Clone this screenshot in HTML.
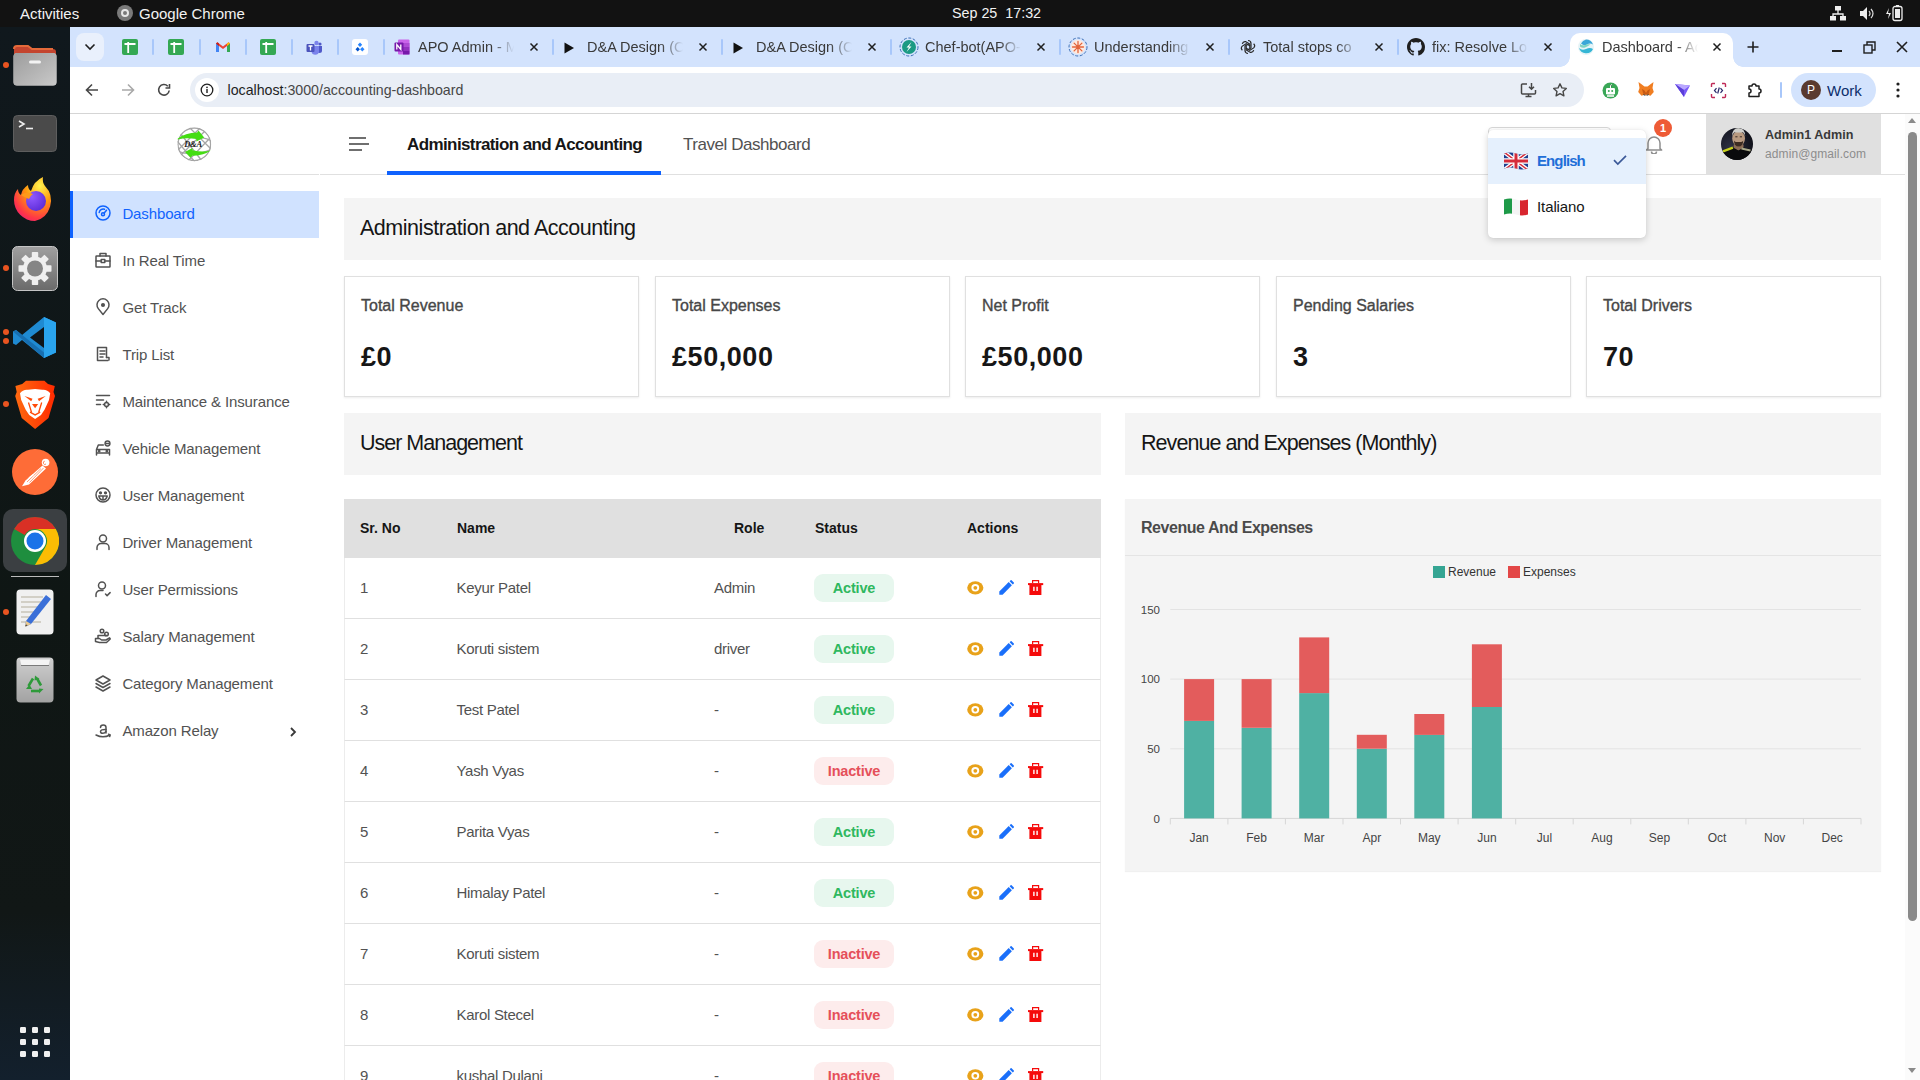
<!DOCTYPE html>
<html><head><meta charset="utf-8">
<style>
*{box-sizing:border-box;margin:0;padding:0}
html,body{width:1920px;height:1080px;overflow:hidden;background:#fff;font-family:"Liberation Sans",sans-serif}
.a{position:absolute}
.nw{white-space:nowrap}
/* gnome bar */
#gbar{left:0;top:0;width:1920px;height:27px;background:#121212;color:#f2f2f2;font-size:15px}
/* dock */
#dock{left:0;top:27px;width:70px;height:1053px;background:linear-gradient(180deg,#10181d 0%,#0f1614 55%,#111716 84%,#13202d 100%)}
.odot{position:absolute;left:3px;width:6px;height:6px;border-radius:50%;background:#e95420}
/* chrome */
#tabs{left:70px;top:27px;width:1850px;height:40px;background:#d3e3fd}
.sep{position:absolute;top:12px;width:2px;height:16px;background:#a8c7fa;border-radius:1px}
.ttl{position:absolute;top:12px;font-size:14.5px;line-height:17px;color:#3a3a3a;width:100px;overflow:hidden;white-space:nowrap;-webkit-mask-image:linear-gradient(90deg,#000 74%,transparent 96%)}
.tx{position:absolute;top:13px;width:14px;height:14px}
#toolbar{left:70px;top:67px;width:1850px;height:47px;background:#fff;border-bottom:1px solid #d5d5d5;border-radius:8px 8px 0 0}
/* page */
#page{left:70px;top:114px;width:1835px;height:966px;background:#fff;overflow:hidden}
#sbar{left:1905px;top:114px;width:15px;height:966px;background:#fbfbfb}

.card{top:162px;width:295px;height:121px;background:#fff;border:1px solid #e0e0e0;box-shadow:0 1px 2px rgba(0,0,0,0.08)}
.cl{position:absolute;left:16px;top:21.2px;font-size:16px;line-height:1;color:#474747;-webkit-text-stroke:0.35px #474747;white-space:nowrap}
.cv{position:absolute;left:16px;top:67.3px;font-size:27px;line-height:1;font-weight:700;color:#161616;letter-spacing:0.55px;white-space:nowrap}
.th{top:407px;font-size:14px;line-height:1;font-weight:700;color:#161616}
.rt{font-size:15px;line-height:1;color:#525252;letter-spacing:-0.3px}
.bdg{width:80px;height:28px;border-radius:9px;font-size:14.5px;font-weight:700;text-align:center;line-height:28px;letter-spacing:-0.2px}
.on{background:#e7f7ee;color:#2fb85f}
.off{background:#fdecec;color:#e5505a}
.si{font-size:15px;line-height:1;letter-spacing:-0.12px}
</style></head><body>

<!-- GNOME top bar -->
<div id="gbar" class="a">
  <div class="a nw" style="left:20px;top:5px;font-size:15px">Activities</div>
  <div class="a" style="left:117px;top:5px;width:16px;height:16px;border-radius:50%;background:#7a7a7a"></div>
  <div class="a" style="left:121px;top:9px;width:8px;height:8px;border-radius:50%;border:2px solid #e8e8e8;background:#7a7a7a"></div>
  <div class="a nw" style="left:139px;top:5px;font-size:15px">Google Chrome</div>
  <div class="a nw" style="left:952px;top:5px;font-size:14.3px">Sep 25&nbsp; 17:32</div>
  <svg class="a" style="left:1829px;top:5px" width="18" height="17" viewBox="0 0 18 17"><rect x="6" y="1" width="6" height="4.5" fill="#eee"/><rect x="1" y="11" width="6" height="4.5" fill="#eee"/><rect x="11" y="11" width="6" height="4.5" fill="#eee"/><path d="M9 5v4M4 11V9h10v2" stroke="#eee" stroke-width="1.3" fill="none"/></svg>
  <svg class="a" style="left:1859px;top:5px" width="16" height="17" viewBox="0 0 16 17"><path d="M1 6h3l4-4v13l-4-4H1z" fill="#eee"/><path d="M10 6q2 2.5 0 5M12 4q4 4.5 0 9" stroke="#ddd" stroke-width="1.2" fill="none"/></svg>
  <svg class="a" style="left:1885px;top:4px" width="20" height="18" viewBox="0 0 20 18"><path d="M4 4L1 10h3l-1 5 3-6H3z" fill="#eee"/><rect x="8" y="2.5" width="9" height="14" rx="2" stroke="#eee" stroke-width="1.3" fill="none"/><rect x="10" y="5" width="5" height="9" fill="#eee"/><rect x="11" y="1" width="3" height="2" fill="#eee"/></svg>
</div>

<!-- Dock -->
<div id="dock" class="a">
<div class="odot" style="top:35px"></div>
<div class="odot" style="top:238px"></div>
<div class="odot" style="top:302px"></div>
<div class="odot" style="top:311px"></div>
<div class="odot" style="top:374px"></div>
<div class="odot" style="top:511px"></div>
<div class="odot" style="top:582px"></div>
<!-- files -->
<svg class="a" style="left:13px;top:18px" width="44" height="41" viewBox="0 0 44 41"><path d="M1 4a3 3 0 0 1 3-3h11l4 3h21a3 3 0 0 1 3 3v10H1z" fill="#c4452f"/><path d="M1 4a3 3 0 0 1 3-3h11l4 3h21" fill="none" stroke="#e46a3a" stroke-width="2"/><rect x="0.5" y="8" width="43" height="32.5" rx="3.5" fill="#b8b8b8"/><rect x="0.5" y="8" width="43" height="32.5" rx="3.5" fill="url(#fg)"/><defs><linearGradient id="fg" x1="0" y1="0" x2="1" y2="1"><stop offset="0" stop-color="#9c9c9c"/><stop offset="1" stop-color="#c9c9c9"/></linearGradient></defs><rect x="16" y="15.5" width="12" height="3" rx="1.5" fill="#f3f3f3"/></svg>
<!-- terminal -->
<svg class="a" style="left:13px;top:88px" width="44" height="37" viewBox="0 0 44 37"><rect x="0.5" y="0.5" width="43" height="36" rx="4" fill="#4a4a4a" stroke="#5e5e5e"/><path d="M6 6l5 3-5 3" fill="none" stroke="#eee" stroke-width="1.6"/><path d="M13 13.5h7" stroke="#eee" stroke-width="1.6"/></svg>
<!-- firefox -->
<svg class="a" style="left:13px;top:150px" width="44" height="45" viewBox="0 0 44 45"><defs><radialGradient id="ff1" cx="0.7" cy="0.2" r="1"><stop offset="0" stop-color="#fff44f"/><stop offset="0.4" stop-color="#ff980e"/><stop offset="0.75" stop-color="#ff3647"/><stop offset="1" stop-color="#e31587"/></radialGradient><radialGradient id="ff2" cx="0.3" cy="0.3" r="0.8"><stop offset="0" stop-color="#9059ff"/><stop offset="1" stop-color="#5b2bd6"/></radialGradient></defs><path d="M22 44a21 21 0 0 1-21-21q0-7 4-11 0 4 3 6 1-6 7-10 0 4 3 6 3-10 12-14-1 5 2 9a21 21 0 0 1-10 35z" fill="url(#ff1)"/><circle cx="23" cy="24" r="10" fill="url(#ff2)"/><path d="M8 18q5-4 12-1-3 2-4 5-5-2-8-4z" fill="#ff9a1a"/></svg>
<!-- settings -->
<svg class="a" style="left:12px;top:219px" width="46" height="45" viewBox="0 0 46 45"><defs><linearGradient id="sg" x1="0" y1="0" x2="0" y2="1"><stop offset="0" stop-color="#a0a0a0"/><stop offset="1" stop-color="#6a6a6a"/></linearGradient></defs><rect x="0.5" y="0.5" width="45" height="44" rx="5" fill="url(#sg)" stroke="#c4c4c4"/><g transform="translate(23,22.5)" fill="#efefef"><circle r="12"/><rect x="-3.2" y="-16.5" width="6.4" height="6" rx="0.8" transform="rotate(0)"/><rect x="-3.2" y="-16.5" width="6.4" height="6" rx="0.8" transform="rotate(45)"/><rect x="-3.2" y="-16.5" width="6.4" height="6" rx="0.8" transform="rotate(90)"/><rect x="-3.2" y="-16.5" width="6.4" height="6" rx="0.8" transform="rotate(135)"/><rect x="-3.2" y="-16.5" width="6.4" height="6" rx="0.8" transform="rotate(180)"/><rect x="-3.2" y="-16.5" width="6.4" height="6" rx="0.8" transform="rotate(225)"/><rect x="-3.2" y="-16.5" width="6.4" height="6" rx="0.8" transform="rotate(270)"/><rect x="-3.2" y="-16.5" width="6.4" height="6" rx="0.8" transform="rotate(315)"/><circle r="8" fill="#858585"/></g></svg>
<!-- vscode -->
<svg class="a" style="left:13px;top:289px" width="44" height="43" viewBox="0 0 44 43"><path d="M31 1l12 5.5v30L31 42 9 24l-6 5-3-1.5v-12L3 14l6 5z" fill="#1f8ad2"/><path d="M31 1l12 5.5v30L31 42z" fill="#2aa4ee"/><path d="M31 11L17 21.5 31 32z" fill="#0f1518"/><path d="M3 14l28 22.5V42L0 15.5z" fill="#176fb1"/></svg>
<!-- brave -->
<svg class="a" style="left:15px;top:353px" width="41" height="50" viewBox="0 0 41 50"><defs><linearGradient id="bg1" x1="0" y1="0" x2="1" y2="0"><stop offset="0" stop-color="#ff6a10"/><stop offset="0.5" stop-color="#ff4a08"/><stop offset="1" stop-color="#ff2a00"/></linearGradient></defs><path d="M11 0.8H29.4L33 4 39.8 6 38.5 12 40 16 33.5 38 20.1 48.9 6.7 38 0.2 16 1.7 12 0.4 6 7.2 4z" fill="url(#bg1)"/><g transform="translate(0,8.9) scale(1,1.1445) translate(0,-4.2)"><path d="M5 8Q8 4.5 13 5L20.1 4.2 27.2 5Q32.2 4.5 35.2 8L34 14 29.5 22.5 26 27 20.1 30.5 14.2 27 10.7 22.5 6.2 14z" fill="#fff"/><g fill="#ff4a08"><path d="M9.5 10.5L17.5 12.8 16.2 15z"/><path d="M30.7 10.5L22.7 12.8 24 15z"/><path d="M17 17.5h6.2L20.1 21z"/></g><path d="M13.5 16l3 8.5M26.7 16l-3 8.5M15 24.5l5.1 2.5 5.1-2.5" fill="none" stroke="#ff4a08" stroke-width="1.3"/></g></svg>
<!-- postman -->
<svg class="a" style="left:12px;top:422px" width="46" height="46" viewBox="0 0 46 46"><circle cx="23" cy="23" r="23" fill="#fe6c37"/><circle cx="33.6" cy="13.5" r="3.8" fill="#fff"/><path d="M32.8 12.2a1.6 1.6 0 1 0 1.2 2.8" fill="none" stroke="#fe6c37" stroke-width="0.8"/><path d="M30.5 16.5L34 19.5 17 35.5 10 37.2 13.5 31.5z" fill="#fff"/><path d="M29 19.5L15 33M31.5 19L17.5 33.5" stroke="#fe6c37" stroke-width="0.7"/><path d="M21.5 25.5l-4.5 3.5" stroke="#fff" stroke-width="1.5"/></svg>
<!-- chrome active -->
<div class="a" style="left:3px;top:482px;width:64px;height:63px;border-radius:10px;background:#3b3f42"></div>
<svg class="a" style="left:11px;top:490px" width="48" height="48" viewBox="0 0 48 48"><circle cx="24" cy="24" r="24" fill="#1e8e3e"/><path d="M24 0a24 24 0 0 1 20.8 12H24a12 12 0 0 0-10.4 6L3.2 12A24 24 0 0 1 24 0z" fill="#d93025"/><path d="M44.8 12A24 24 0 0 1 24 48l10.4-18A12 12 0 0 0 24 12z" fill="#fbbc04"/><circle cx="24" cy="24" r="11" fill="#fff"/><circle cx="24" cy="24" r="8.5" fill="#1a73e8"/></svg>
<div class="a" style="left:11px;top:549px;width:48px;height:1px;background:#bbb"></div>
<!-- text editor -->
<svg class="a" style="left:16px;top:562px" width="38" height="46" viewBox="0 0 38 46"><rect x="0.5" y="0.5" width="37" height="45" rx="4" fill="#f0f0f0"/><path d="M5 8h22M5 13h20M5 18h18M5 23h14M5 28h12M5 33h20" stroke="#c8c3b8" stroke-width="1.5"/><path d="M30 6l5 4-20 25-6 3 1-6z" fill="#3a6fd8"/><path d="M10 32l5 3-6 3z" fill="#e8c890"/><path d="M9 37l1.5-1.5 1 1z" fill="#222"/></svg>
<!-- trash -->
<svg class="a" style="left:16px;top:630px" width="38" height="46" viewBox="0 0 38 46"><defs><linearGradient id="tg" x1="0" y1="0" x2="0" y2="1"><stop offset="0" stop-color="#cfcfcf"/><stop offset="1" stop-color="#a2a2a2"/></linearGradient></defs><rect x="0.5" y="0.5" width="37" height="45" rx="4" fill="url(#tg)"/><path d="M4 2.5h30l-1.5 6h-27z" fill="#f4f4f4"/><path d="M5 8.5h28" stroke="#7a7a7a" stroke-width="1"/><g fill="none" stroke="#2e9a3a" stroke-width="2.6" stroke-linejoin="round"><path d="M17 21.5l-4.5 7.5"/><path d="M21 21.5l4 7"/><path d="M23 34h-8"/></g><g fill="#2e9a3a"><path d="M19 18.5l4.5 3.5-5 1.5z"/><path d="M27.5 32l-4.5 4.5 0-5z"/><path d="M10 32l3.5-4.5 2.5 4.5z"/></g></svg>
<!-- app grid -->
<svg class="a" style="left:19px;top:999px" width="32" height="32" viewBox="0 0 32 32"><g fill="#f0f0f0"><rect x="1" y="1" width="6" height="6" rx="1.2"/><rect x="13" y="1" width="6" height="6" rx="1.2"/><rect x="25" y="1" width="6" height="6" rx="1.2"/><rect x="1" y="13" width="6" height="6" rx="1.2"/><rect x="13" y="13" width="6" height="6" rx="1.2"/><rect x="25" y="13" width="6" height="6" rx="1.2"/><rect x="1" y="25" width="6" height="6" rx="1.2"/><rect x="13" y="25" width="6" height="6" rx="1.2"/><rect x="25" y="25" width="6" height="6" rx="1.2"/></g></svg>

</div>

<!-- Chrome tab strip -->
<div id="tabs" class="a">
<div class="a" style="left:6px;top:6px;width:28px;height:28px;border-radius:8px;background:#e9f0fc"></div>
<svg class="a" style="left:14px;top:15px" width="12" height="10" viewBox="0 0 12 10"><path d="M1.5 2.5L6 7l4.5-4.5" fill="none" stroke="#1f1f1f" stroke-width="1.6"/></svg>
<div class="a" style="left:52px;top:12px;line-height:0"><svg width="16" height="16" viewBox="0 0 16 16"><rect width="16" height="16" rx="2" fill="#34a853"/><path d="M2.5 5h11M6.2 3v11" stroke="#fff" stroke-width="1.8"/></svg></div>
<div class="a" style="left:98px;top:12px;line-height:0"><svg width="16" height="16" viewBox="0 0 16 16"><rect width="16" height="16" rx="2" fill="#34a853"/><path d="M2.5 5h11M6.2 3v11" stroke="#fff" stroke-width="1.8"/></svg></div>
<div class="a" style="left:145px;top:12px;line-height:0"><svg width="16" height="16" viewBox="0 0 16 16"><path d="M1 4.5v8.5h3V7l4 3 4-3v6h3V4.5L13.6 3.2 8 7.4 2.4 3.2z" fill="#ea4335"/><path d="M1 4.5v8.5h3V7z" fill="#4285f4"/><path d="M12 7v6h3V4.5z" fill="#34a853"/><path d="M15 4.5l-1.4-1.3L12 4.4V7z" fill="#fbbc04"/><path d="M1 4.5l1.4-1.3L4 4.4V7z" fill="#c5221f"/></svg></div>
<div class="a" style="left:190px;top:12px;line-height:0"><svg width="16" height="16" viewBox="0 0 16 16"><rect width="16" height="16" rx="2" fill="#34a853"/><path d="M2.5 5h11M6.2 3v11" stroke="#fff" stroke-width="1.8"/></svg></div>
<div class="a" style="left:236px;top:12px;line-height:0"><svg width="16" height="16" viewBox="0 0 16 16"><circle cx="10.5" cy="4" r="2.2" fill="#7b83eb"/><circle cx="14" cy="5" r="1.6" fill="#5059c9"/><path d="M11 7h5v4.5a2.5 2.5 0 0 1-5 0z" fill="#5059c9"/><path d="M5.5 7h7.5v5.5a3.8 3.8 0 0 1-7.5 0z" fill="#7b83eb"/><rect x="0.5" y="5" width="8" height="8" rx="1" fill="#4b53bc"/><path d="M2.5 7h4M4.5 7v4.5" stroke="#fff" stroke-width="1.3"/></svg></div>
<div class="a" style="left:282px;top:12px;line-height:0"><svg width="16" height="16" viewBox="0 0 16 16"><rect width="16" height="16" rx="3" fill="#fff"/><path d="M8 3.5l2.2 2.2L8 7.9 5.8 5.7z" fill="#2684ff"/><path d="M5.7 8l2.2 2.2-2.2 2.2L3.5 10.2z" fill="#0052cc"/><path d="M10.3 8l2.2 2.2-2.2 2.2L8.1 10.2z" fill="#2684ff"/></svg></div>
<div class="sep" style="left:82px"></div>
<div class="sep" style="left:129px"></div>
<div class="sep" style="left:175px"></div>
<div class="sep" style="left:221px"></div>
<div class="sep" style="left:267px"></div>
<div class="sep" style="left:313px"></div>
<div class="a" style="left:324px;top:12px;line-height:0"><svg width="16" height="16" viewBox="0 0 16 16"><rect x="4" y="0.5" width="11.5" height="15" rx="1" fill="#ca64ea"/><rect x="9" y="4" width="6.5" height="4" fill="#ae4bd5"/><rect x="9" y="8" width="6.5" height="4" fill="#9332bf"/><rect x="9" y="12" width="6.5" height="3.5" fill="#7719aa"/><rect x="0.5" y="3.5" width="9" height="9" rx="1" fill="#7719aa"/><path d="M2.8 10.5V5.5l4 5V5.5" stroke="#fff" stroke-width="1.3" fill="none"/></svg></div>
<div class="ttl" style="left:348px;width:100px">APO Admin - M</div>
<div class="tx" style="left:456.5px"><svg width="14" height="14" viewBox="0 0 14 14"><path d="M3.5 3.5l7 7M10.5 3.5l-7 7" stroke="#1f1f1f" stroke-width="1.5"/></svg></div>
<div class="sep" style="left:482px"></div>
<div class="a" style="left:491px;top:13px;line-height:0"><svg width="16" height="16" viewBox="0 0 16 16"><path d="M3.5 2.5L13 8l-9.5 5.5z" fill="#111"/></svg></div>
<div class="ttl" style="left:517px;width:100px">D&amp;A Design (C</div>
<div class="tx" style="left:625.5px"><svg width="14" height="14" viewBox="0 0 14 14"><path d="M3.5 3.5l7 7M10.5 3.5l-7 7" stroke="#1f1f1f" stroke-width="1.5"/></svg></div>
<div class="sep" style="left:651px"></div>
<div class="a" style="left:660px;top:13px;line-height:0"><svg width="16" height="16" viewBox="0 0 16 16"><path d="M3.5 2.5L13 8l-9.5 5.5z" fill="#111"/></svg></div>
<div class="ttl" style="left:686px;width:100px">D&amp;A Design (C</div>
<div class="tx" style="left:794.5px"><svg width="14" height="14" viewBox="0 0 14 14"><path d="M3.5 3.5l7 7M10.5 3.5l-7 7" stroke="#1f1f1f" stroke-width="1.5"/></svg></div>
<div class="sep" style="left:820px"></div>
<div class="a" style="left:829px;top:10px;line-height:0"><svg width="20" height="20" viewBox="0 0 20 20"><circle cx="10" cy="10" r="9" fill="none" stroke="#3b6fb6" stroke-width="1" stroke-dasharray="3 1.6"/><circle cx="10" cy="10" r="7" fill="#1a9a83"/><path d="M12.5 5l-5 5.5h2.5L7.5 15l5-5.5H10z" fill="#fff"/></svg></div>
<div class="ttl" style="left:855px;width:100px">Chef-bot(APO-</div>
<div class="tx" style="left:963.5px"><svg width="14" height="14" viewBox="0 0 14 14"><path d="M3.5 3.5l7 7M10.5 3.5l-7 7" stroke="#1f1f1f" stroke-width="1.5"/></svg></div>
<div class="sep" style="left:989px"></div>
<div class="a" style="left:998px;top:10px;line-height:0"><svg width="20" height="20" viewBox="0 0 20 20"><circle cx="10" cy="10" r="9" fill="none" stroke="#3b6fb6" stroke-width="1" stroke-dasharray="3 1.6"/><circle cx="10" cy="10" r="7.2" fill="#fce9e0"/><g stroke="#e2643b" stroke-width="1.3" stroke-linecap="round"><path d="M10 4.5v11M4.5 10h11M6.1 6.1l7.8 7.8M13.9 6.1l-7.8 7.8"/></g></svg></div>
<div class="ttl" style="left:1024px;width:100px">Understanding</div>
<div class="tx" style="left:1132.5px"><svg width="14" height="14" viewBox="0 0 14 14"><path d="M3.5 3.5l7 7M10.5 3.5l-7 7" stroke="#1f1f1f" stroke-width="1.5"/></svg></div>
<div class="sep" style="left:1158px"></div>
<div class="a" style="left:1170px;top:12px;line-height:0"><svg width="16" height="16" viewBox="0 0 16 16"><g fill="none" stroke="#2a2a2a" stroke-width="1.2"><path d="M8 1.5a3 3 0 0 1 3 3v4.5l-4 2.3"/><path d="M13.6 4.7a3 3 0 0 1 .1 4.2L9.8 11.2 5.8 8.9"/><path d="M13.7 11.2a3 3 0 0 1-3.6 2.1L6.2 11V6.5"/><path d="M8 14.5a3 3 0 0 1-3-3V7l4-2.3"/><path d="M2.4 11.3a3 3 0 0 1-.1-4.2L6.2 4.8l4 2.3"/><path d="M2.3 4.8a3 3 0 0 1 3.6-2.1L9.8 5v4.5"/></g></svg></div>
<div class="ttl" style="left:1193px;width:100px">Total stops co</div>
<div class="tx" style="left:1301.5px"><svg width="14" height="14" viewBox="0 0 14 14"><path d="M3.5 3.5l7 7M10.5 3.5l-7 7" stroke="#1f1f1f" stroke-width="1.5"/></svg></div>
<div class="sep" style="left:1327px"></div>
<div class="a" style="left:1337px;top:11px;line-height:0"><svg width="18" height="18" viewBox="0 0 16 16"><path fill="#1f1f1f" d="M8 0C3.58 0 0 3.58 0 8c0 3.54 2.29 6.53 5.47 7.59.4.07.55-.17.55-.38 0-.19-.01-.82-.01-1.49-2.01.37-2.53-.49-2.69-.94-.09-.23-.48-.94-.82-1.13-.28-.15-.68-.52-.01-.53.63-.01 1.08.58 1.23.82.72 1.21 1.87.87 2.33.66.07-.52.28-.87.51-1.07-1.78-.2-3.64-.89-3.64-3.95 0-.87.31-1.59.82-2.15-.08-.2-.36-1.02.08-2.12 0 0 .67-.21 2.2.82.64-.18 1.32-.27 2-.27.68 0 1.36.09 2 .27 1.53-1.04 2.2-.82 2.2-.82.44 1.1.16 1.92.08 2.12.51.56.82 1.27.82 2.15 0 3.07-1.87 3.75-3.65 3.95.29.25.54.73.54 1.48 0 1.07-.01 1.93-.01 2.2 0 .21.15.46.55.38A8.013 8.013 0 0016 8c0-4.42-3.58-8-8-8z"/></svg></div>
<div class="ttl" style="left:1362px;width:100px">fix: Resolve Lo</div>
<div class="tx" style="left:1470.5px"><svg width="14" height="14" viewBox="0 0 14 14"><path d="M3.5 3.5l7 7M10.5 3.5l-7 7" stroke="#1f1f1f" stroke-width="1.5"/></svg></div>
<div class="a" style="left:1500px;top:6px;width:163px;height:34px;background:#fff;border-radius:10px 10px 0 0"></div>
<div class="a" style="left:1490px;top:30px;width:10px;height:10px;background:radial-gradient(circle at 0 0,transparent 9.5px,#fff 10px)"></div>
<div class="a" style="left:1663px;top:30px;width:10px;height:10px;background:radial-gradient(circle at 100% 0,transparent 9.5px,#fff 10px)"></div>
<div class="a" style="left:1508px;top:12px;line-height:0"><svg width="16" height="16" viewBox="0 0 16 16"><circle cx="8" cy="8" r="8" fill="#e6f4f7"/><path d="M8 0.5a7.5 7.5 0 0 1 7 5q-3-2-6 0t-6-1A7.5 7.5 0 0 1 8 .5z" fill="#3aa7d8"/><path d="M1 9q3 3 7 1t7 0A7.5 7.5 0 0 1 1 9z" fill="#35b6d5"/><path d="M2 5q2.5 2 5 1t5.5-.5q-3 2-5.5 3T2 7.5z" fill="#7fd3c4"/></svg></div>
<div class="ttl" style="left:1532px;width:100px">Dashboard - Ac</div>
<div class="tx" style="left:1640px"><svg width="14" height="14" viewBox="0 0 14 14"><path d="M3.5 3.5l7 7M10.5 3.5l-7 7" stroke="#1f1f1f" stroke-width="1.5"/></svg></div>
<svg class="a" style="left:1676px;top:13px" width="14" height="14" viewBox="0 0 14 14"><path d="M7 1.5v11M1.5 7h11" stroke="#1f1f1f" stroke-width="1.6"/></svg>
<div class="a" style="left:1762px;top:23px;width:10px;height:1.6px;background:#1f1f1f"></div>
<svg class="a" style="left:1793px;top:14px" width="13" height="13" viewBox="0 0 13 13"><rect x="1" y="4" width="8" height="8" fill="none" stroke="#1f1f1f" stroke-width="1.4"/><path d="M4 4V1h8v8H9" fill="none" stroke="#1f1f1f" stroke-width="1.4"/></svg>
<svg class="a" style="left:1825px;top:13px" width="14" height="14" viewBox="0 0 14 14"><path d="M2 2l10 10M12 2L2 12" stroke="#1f1f1f" stroke-width="1.6"/></svg>
</div>

<!-- Chrome toolbar -->
<div id="toolbar" class="a">
<svg class="a" style="left:15px;top:16px" width="14" height="14" viewBox="0 0 14 14"><path d="M13 7H2M7 1.5L1.5 7 7 12.5" fill="none" stroke="#474747" stroke-width="1.6"/></svg>
<svg class="a" style="left:51px;top:16px" width="14" height="14" viewBox="0 0 14 14"><path d="M1 7h11M7 1.5L12.5 7 7 12.5" fill="none" stroke="#a9a9a9" stroke-width="1.6"/></svg>
<svg class="a" style="left:87px;top:16px" width="14" height="14" viewBox="0 0 14 14"><path d="M12.2 7.5A5.3 5.3 0 1 1 10.8 3.2" fill="none" stroke="#474747" stroke-width="1.6"/><path d="M12.5 1v4h-4" fill="none" stroke="#474747" stroke-width="1.6"/></svg>
<div class="a" style="left:120px;top:6px;width:1394px;height:34px;border-radius:17px;background:#e9eef6"></div>
<div class="a" style="left:125px;top:11px;width:24px;height:24px;border-radius:50%;background:#fff"></div>
<svg class="a" style="left:130px;top:16px" width="14" height="14" viewBox="0 0 14 14"><circle cx="7" cy="7" r="5.8" fill="none" stroke="#1f1f1f" stroke-width="1.3"/><rect x="6.3" y="6" width="1.4" height="4" fill="#1f1f1f"/><circle cx="7" cy="4.3" r="0.85" fill="#1f1f1f"/></svg>
<div class="a nw" style="left:157.5px;top:15.5px;font-size:14.2px;line-height:1;color:#1f1f1f">localhost<span style="color:#474747">:3000/accounting-dashboard</span></div>
<svg class="a" style="left:1450px;top:15px" width="17" height="16" viewBox="0 0 17 16"><path d="M7 2H2.5a1 1 0 0 0-1 1v8a1 1 0 0 0 1 1h12a1 1 0 0 0 1-1V8" fill="none" stroke="#474747" stroke-width="1.5"/><path d="M5.5 14.5h6M8.5 12v2.5" stroke="#474747" stroke-width="1.5"/><path d="M11.5 1v6M9 4.8l2.5 2.5 2.5-2.5" fill="none" stroke="#474747" stroke-width="1.5"/></svg>
<svg class="a" style="left:1482px;top:15px" width="16" height="16" viewBox="0 0 16 16"><path d="M8 1.8l1.9 4.1 4.4.5-3.3 3 .9 4.4L8 11.6l-3.9 2.2.9-4.4-3.3-3 4.4-.5z" fill="none" stroke="#474747" stroke-width="1.4" stroke-linejoin="round"/></svg>
<svg class="a" style="left:1532px;top:15px" width="17" height="17" viewBox="0 0 17 17"><circle cx="8.5" cy="8.5" r="8" fill="#3aa757"/><rect x="4" y="6" width="9" height="6.5" rx="1.2" fill="#fff"/><circle cx="6.8" cy="9" r="1" fill="#3aa757"/><circle cx="10.2" cy="9" r="1" fill="#3aa757"/><path d="M8.5 6V3.5l1.5-1" stroke="#fff" stroke-width="1"/><rect x="5" y="13" width="7" height="2" fill="#cfe8d5"/></svg>
<svg class="a" style="left:1567px;top:14px" width="18" height="17" viewBox="0 0 18 17"><path d="M1.5 1l6 4.5h3L16.5 1l-1 6 1.3 4-3.3 3.8-3-1h-3l-3 1L1.2 11l1.3-4z" fill="#f07e22"/><path d="M5 8l2.5 1.5L9 12l1.5-2.5L13 8l-1 4-3 2-3-2z" fill="#c85a14"/><path d="M6 12.5l3 2 3-2-1 2h-4z" fill="#2a2a2a"/></svg>
<svg class="a" style="left:1604px;top:15px" width="17" height="17" viewBox="0 0 17 17"><path d="M1 2l15 1.5L10 15z" fill="#7a5af8"/><path d="M1 2l9 6 6-4.5z" fill="#b9a7ff"/><path d="M10 8v7L1 2z" fill="#5a3fd8"/></svg>
<svg class="a" style="left:1640px;top:15px" width="17" height="17" viewBox="0 0 17 17"><path d="M5 1.5H2.5a1 1 0 0 0-1 1V5M12 1.5h2.5a1 1 0 0 1 1 1V5M1.5 12v2.5a1 1 0 0 0 1 1H5M15.5 12v2.5a1 1 0 0 1-1 1H12" fill="none" stroke="#c02b57" stroke-width="1.4"/><path d="M6.5 6.2L4.5 8.5l2 2.3M10.5 6.2l2 2.3-2 2.3M9.3 5.5l-1.6 6" fill="none" stroke="#2a2a6a" stroke-width="1.2"/></svg>
<svg class="a" style="left:1676px;top:14px" width="18" height="18" viewBox="0 0 18 18"><path d="M2.5 5.5h3a2 2 0 0 1 4 0h3v3a2 2 0 0 1 0 4v3.5h-10v-3.5a2 2 0 0 0 0-4z" fill="none" stroke="#1f1f1f" stroke-width="1.5" stroke-linejoin="round" transform="translate(0.5,-0.5)"/></svg>
<div class="a" style="left:1710px;top:15px;width:2px;height:16px;background:#a8c7fa;border-radius:1px"></div>
<div class="a" style="left:1721px;top:6px;width:85px;height:34px;border-radius:17px;background:#d3e3fd"></div>
<div class="a" style="left:1731px;top:13px;width:20px;height:20px;border-radius:50%;background:#5a3a2f;color:#fff;font-size:12px;text-align:center;line-height:20px">P</div>
<div class="a nw" style="left:1757px;top:16px;font-size:15px;line-height:1;color:#0b2e6b">Work</div>
<svg class="a" style="left:1825px;top:14px" width="6" height="18" viewBox="0 0 6 18"><circle cx="3" cy="3" r="1.6" fill="#1f1f1f"/><circle cx="3" cy="9" r="1.6" fill="#1f1f1f"/><circle cx="3" cy="15" r="1.6" fill="#1f1f1f"/></svg>

</div>

<!-- Page -->
<div id="page" class="a">
<!-- Sidebar -->
<div class="a" style="left:0;top:0;width:249px;height:61px;border-bottom:1px solid #e0e0e0"></div>
<div class="a" style="left:250px;top:0;width:1585px;height:61px;border-bottom:1px solid #e0e0e0"></div>
<svg class="a" style="left:107px;top:13px" width="35" height="35" viewBox="0 0 35 35">
  <defs><clipPath id="lg"><circle cx="17.3" cy="17.3" r="17"/></clipPath></defs>
  <g clip-path="url(#lg)" fill="none" stroke="#a6a6a6" stroke-width="1.3">
    <circle cx="17.3" cy="17.3" r="16.3"/>
    <path d="M3 6l22 28M12 0l22 22M0 14l18 21M24 0L0 24M34 10L10 35M2 30L30 2"/>
    <path d="M0 12q17-6 35 2M0 24q17 6 35-2"/>
  </g>
  <path d="M0.7 11.7Q8 6 20.2 5.6L21.5 3.6 27.2 10.5 19.4 14.5 19.3 12.1Q9 10 0.7 12.6z" fill="#44dd12"/>
  <path d="M33.7 23.5Q26 29 15.4 28.6L13.7 30.8 8 25.1 15.4 21 15.6 23.2Q26 25.5 33.7 23.5z" fill="#44dd12"/>
  <text x="16" y="19.8" text-anchor="middle" font-family="Liberation Serif" font-style="italic" font-weight="700" font-size="8.5" fill="#1a1a1a" letter-spacing="-0.3">D&amp;A</text>
</svg>
<!-- active item -->
<div class="a" style="left:0;top:77px;width:249px;height:47px;background:#d0e2ff;border-left:3px solid #0f62fe"></div>

<!-- hamburger -->
<div class="a" style="left:279px;top:23px;width:17px;height:1.6px;background:#6f6f6f"></div>
<div class="a" style="left:279px;top:29px;width:20px;height:1.6px;background:#6f6f6f"></div>
<div class="a" style="left:279px;top:35px;width:13px;height:1.6px;background:#6f6f6f"></div>
<!-- header tabs -->
<div class="a nw" style="left:337px;top:22px;font-size:17px;line-height:1;font-weight:700;color:#161616;letter-spacing:-0.6px">Administration and Accounting</div>
<div class="a" style="left:317px;top:57px;width:274px;height:4px;background:#0f62fe"></div>
<div class="a nw" style="left:613px;top:22px;font-size:17px;line-height:1;color:#525252;letter-spacing:-0.45px">Travel Dashboard</div>

<!-- select trigger behind dropdown -->
<div class="a" style="left:1418px;top:13px;width:123px;height:40px;border:1px solid #d8d8d8;border-radius:4px;background:#fff"></div>
<!-- bell -->
<svg class="a" style="left:1575px;top:21px" width="18" height="19" viewBox="0 0 18 19"><path d="M3 13.5V8a6 6 0 0 1 12 0v5.5l1.6 1.6H1.4z" fill="none" stroke="#8d8d8d" stroke-width="1.5" stroke-linejoin="round"/><path d="M6.5 16.5a2.5 2.5 0 0 0 5 0" fill="none" stroke="#8d8d8d" stroke-width="1.5"/></svg>
<div class="a" style="left:1584px;top:5px;width:18px;height:18px;border-radius:50%;background:#ee5b36;color:#fff;font-size:11px;font-weight:700;text-align:center;line-height:18px">1</div>
<!-- user -->
<div class="a" style="left:1636px;top:0;width:175px;height:60px;background:#e0e0e0"></div>
<svg class="a" style="left:1651px;top:14px" width="32" height="32" viewBox="0 0 32 32">
  <defs><clipPath id="av"><circle cx="16" cy="16" r="16"/></clipPath><radialGradient id="avb" cx="0.3" cy="0.6" r="0.8"><stop offset="0" stop-color="#2e3144"/><stop offset="1" stop-color="#0c0d14"/></radialGradient></defs>
  <g clip-path="url(#av)">
  <rect width="32" height="32" fill="url(#avb)"/>
  <path d="M12.7 16.5h9.8v6h-9.8z" fill="#8c6d55"/>
  <path d="M0 24q4-3 12-4.5l5.5 3 5-3q7 1 9.5 4V32H0z" fill="#0a0a0c"/>
  <path d="M2 23.3L11.9 19.6" stroke="#c8d21e" stroke-width="2.3"/>
  <path d="M20.5 20.5l9 2" stroke="#a9a98a" stroke-width="2"/>
  <ellipse cx="17.6" cy="10.6" rx="6.4" ry="7.6" fill="#b99a80"/>
  <path d="M11 8.5q0-8.5 6.6-8.5t6.6 8.5q-1-4-2.5-4.3-4 .8-8.2 0-1.7.8-2.5 4.3z" fill="#cfcfcb"/>
  <path d="M13 12.5q0 6 4.6 6t4.6-6q-1 1.5-2.3 1.5h-4.6q-1.3 0-2.3-1.5z" fill="#3d2c22"/>
  <path d="M14.3 8.8h2.2M18.8 8.8h2.2" stroke="#3a2a22" stroke-width="1"/>
  </g>
</svg>
<div class="a nw" style="left:1695px;top:15px;font-size:12.6px;line-height:1;font-weight:700;color:#393939">Admin1 Admin</div>
<div class="a nw" style="left:1695px;top:34px;font-size:12px;line-height:1;color:#8d8d8d;letter-spacing:0.1px">admin@gmail.com</div>

<!-- title box -->
<div class="a" style="left:274px;top:84px;width:1537px;height:62px;background:#f4f4f4"></div>
<div class="a nw" style="left:290px;top:103.6px;font-size:21.5px;line-height:1;color:#161616;letter-spacing:-0.47px">Administration and Accounting</div>

<!-- cards -->
<div class="a card" style="left:274px"><div class="cl">Total Revenue</div><div class="cv">£0</div></div>
<div class="a card" style="left:585px"><div class="cl">Total Expenses</div><div class="cv">£50,000</div></div>
<div class="a card" style="left:895px"><div class="cl">Net Profit</div><div class="cv">£50,000</div></div>
<div class="a card" style="left:1206px"><div class="cl">Pending Salaries</div><div class="cv">3</div></div>
<div class="a card" style="left:1516px"><div class="cl">Total Drivers</div><div class="cv">70</div></div>

<!-- section headers -->
<div class="a" style="left:274px;top:299px;width:757px;height:62px;background:#f4f4f4"></div>
<div class="a nw" style="left:290px;top:318.7px;font-size:21.5px;line-height:1;color:#161616;letter-spacing:-1.0px">User Management</div>
<div class="a" style="left:1055px;top:299px;width:756px;height:62px;background:#f4f4f4"></div>
<div class="a nw" style="left:1071px;top:318.7px;font-size:21.5px;line-height:1;color:#161616;letter-spacing:-0.95px">Revenue and Expenses (Monthly)</div>

<!-- table header -->
<div class="a" style="left:274px;top:385px;width:757px;height:59px;background:#e0e0e0"></div>
<div class="a nw th" style="left:290px">Sr. No</div>
<div class="a nw th" style="left:387px">Name</div>
<div class="a nw th" style="left:664px">Role</div>
<div class="a nw th" style="left:745px">Status</div>
<div class="a nw th" style="left:897px">Actions</div>

<!-- chart card -->
<div class="a" style="left:1055px;top:385px;width:756px;height:372px;background:#f4f4f4;box-shadow:0 1px 1px rgba(0,0,0,0.06)"></div>
<div class="a" style="left:1055px;top:441px;width:756px;height:1px;background:#e4e4e4"></div>
<div class="a nw" style="left:1071px;top:405.5px;font-size:16px;line-height:1;font-weight:700;color:#4a4a4a;letter-spacing:-0.45px">Revenue And Expenses</div>

<div class="a" style="left:24px;top:90px;line-height:0"><svg width="18" height="18" viewBox="0 0 18 18" fill="none" stroke="#0f62fe" stroke-width="1.5" stroke-linecap="round" stroke-linejoin="round"><circle cx="9" cy="9" r="7"/><circle cx="9" cy="10.2" r="1.5"/><path d="M10.2 9L12.5 6.2"/><path d="M5.2 8.5a4 4 0 0 1 5.3-3.3"/></svg></div>
<div class="a nw si" style="left:52.4px;top:92.25px;color:#0f62fe">Dashboard</div>
<div class="a" style="left:24px;top:137px;line-height:0"><svg width="18" height="18" viewBox="0 0 18 18" fill="none" stroke="#525252" stroke-width="1.5" stroke-linecap="round" stroke-linejoin="round"><rect x="2" y="5" width="14" height="11" rx="0.5"/><path d="M6 5V2.5h6V5M2 10h14"/><rect x="7.2" y="8.5" width="3.6" height="3" fill="#fff"/></svg></div>
<div class="a nw si" style="left:52.4px;top:139.25px;color:#525252">In Real Time</div>
<div class="a" style="left:24px;top:184px;line-height:0"><svg width="18" height="18" viewBox="0 0 18 18" fill="none" stroke="#525252" stroke-width="1.5" stroke-linecap="round" stroke-linejoin="round"><path d="M9 16.5L4.3 10.6a6 6 0 1 1 9.4 0z"/><circle cx="9" cy="7" r="1.3" fill="#525252"/></svg></div>
<div class="a nw si" style="left:52.4px;top:186.25px;color:#525252">Get Track</div>
<div class="a" style="left:24px;top:231px;line-height:0"><svg width="18" height="18" viewBox="0 0 18 18" fill="none" stroke="#525252" stroke-width="1.5" stroke-linecap="round" stroke-linejoin="round"><path d="M14 15.5H3.5V2.5h9v10"/><path d="M6 6h5M6 9h5M6 12h3"/><path d="M12.5 12.5h2.5v2.5"/></svg></div>
<div class="a nw si" style="left:52.4px;top:233.25px;color:#525252">Trip List</div>
<div class="a" style="left:24px;top:278px;line-height:0"><svg width="18" height="18" viewBox="0 0 18 18" fill="none" stroke="#525252" stroke-width="1.5" stroke-linecap="round" stroke-linejoin="round"><path d="M2.5 3.5h13M2.5 8h7M2.5 12.5h4"/><circle cx="12.5" cy="12.5" r="2" /><path d="M12.5 9.3v1.2M12.5 14.5v1.2M9.3 12.5h1.2M14.5 12.5h1.2"/></svg></div>
<div class="a nw si" style="left:52.4px;top:280.25px;color:#525252">Maintenance &amp; Insurance</div>
<div class="a" style="left:24px;top:325px;line-height:0"><svg width="18" height="18" viewBox="0 0 18 18" fill="none" stroke="#525252" stroke-width="1.5" stroke-linecap="round" stroke-linejoin="round"><path d="M2.5 16v-5.5l1.8-4.5h5M2.5 10.5h13V16M2.5 14h13"/><circle cx="5.2" cy="12.2" r="0.6" fill="#525252"/><circle cx="12.8" cy="12.2" r="0.6" fill="#525252"/><circle cx="13.5" cy="4.5" r="2.4"/><path d="M12.3 4.5h2.4"/></svg></div>
<div class="a nw si" style="left:52.4px;top:327.25px;color:#525252">Vehicle Management</div>
<div class="a" style="left:24px;top:372px;line-height:0"><svg width="18" height="18" viewBox="0 0 18 18" fill="none" stroke="#525252" stroke-width="1.5" stroke-linecap="round" stroke-linejoin="round"><circle cx="9" cy="9" r="7"/><circle cx="6.5" cy="6.8" r="0.9" fill="#525252"/><circle cx="11.5" cy="6.8" r="0.9" fill="#525252"/><path d="M4.8 10h8.4q-1 4-4.2 4t-4.2-4zM9 10v4"/></svg></div>
<div class="a nw si" style="left:52.4px;top:374.25px;color:#525252">User Management</div>
<div class="a" style="left:24px;top:419px;line-height:0"><svg width="18" height="18" viewBox="0 0 18 18" fill="none" stroke="#525252" stroke-width="1.5" stroke-linecap="round" stroke-linejoin="round"><circle cx="9" cy="5.5" r="3.5"/><path d="M3 16.5v-2a4 4 0 0 1 4-4h4a4 4 0 0 1 4 4v2"/></svg></div>
<div class="a nw si" style="left:52.4px;top:421.25px;color:#525252">Driver Management</div>
<div class="a" style="left:24px;top:466px;line-height:0"><svg width="18" height="18" viewBox="0 0 18 18" fill="none" stroke="#525252" stroke-width="1.5" stroke-linecap="round" stroke-linejoin="round"><circle cx="8" cy="5.5" r="3.5"/><path d="M2 16.5v-2a4 4 0 0 1 4-4h3"/><path d="M11.5 14l1.6 1.6 3-3"/></svg></div>
<div class="a nw si" style="left:52.4px;top:468.25px;color:#525252">User Permissions</div>
<div class="a" style="left:24px;top:513px;line-height:0"><svg width="18" height="18" viewBox="0 0 18 18" fill="none" stroke="#525252" stroke-width="1.5" stroke-linecap="round" stroke-linejoin="round"><path d="M1.5 11.5h4l2 1.5h4.5l3.5-2.2q1 .5.5 1.5l-3.5 3.2H5.5l-4-1z"/><circle cx="8" cy="4" r="1.8"/><circle cx="12.5" cy="7" r="1.8"/><path d="M4 11.5v-3h8.5"/></svg></div>
<div class="a nw si" style="left:52.4px;top:515.25px;color:#525252">Salary Management</div>
<div class="a" style="left:24px;top:560px;line-height:0"><svg width="18" height="18" viewBox="0 0 18 18" fill="none" stroke="#525252" stroke-width="1.5" stroke-linecap="round" stroke-linejoin="round"><path d="M9 2L16 6 9 10 2 6z"/><path d="M2 9.5L9 13.5 16 9.5"/><path d="M2 13L9 17 16 13"/></svg></div>
<div class="a nw si" style="left:52.4px;top:562.25px;color:#525252">Category Management</div>
<div class="a" style="left:24px;top:607px;line-height:0"><svg width="18" height="18" viewBox="0 0 18 18" fill="none" stroke="#525252" stroke-width="1.5" stroke-linecap="round" stroke-linejoin="round"><path d="M6.5 6.5q0-2.5 2.8-2.5 2.7 0 2.7 2.5v5.5"/><path d="M12 8.5q-5.5-.2-5.5 2 0 1.8 2.2 1.8 2.3 0 3.3-2"/><path d="M2 14q7 3.5 14 0"/><path d="M14.5 13.2l1.5.8-.3 1.6"/></svg></div>
<div class="a nw si" style="left:52.4px;top:609.25px;color:#525252">Amazon Relay</div>
<svg class="a" style="left:218px;top:611.5px" width="10" height="12" viewBox="0 0 10 12"><path d="M3 2l4 4-4 4" fill="none" stroke="#393939" stroke-width="1.8"/></svg>
<div class="a" style="left:274px;top:444px;width:757px;height:61px;border-bottom:1px solid #e0e0e0;border-left:1px solid #ececec;border-right:1px solid #ececec"></div>
<div class="a nw rt" style="left:290px;top:466.0px">1</div>
<div class="a nw rt" style="left:386.5px;top:466.0px">Keyur Patel</div>
<div class="a nw rt" style="left:644px;top:466.0px">Admin</div>
<div class="a bdg on" style="left:744px;top:460px">Active</div>
<div class="a" style="left:897px;top:466.5px;line-height:0"><svg width="17" height="14" viewBox="0 0 17 14"><ellipse cx="8.3" cy="6.8" rx="8.1" ry="6.6" fill="#e8a21a"/><ellipse cx="8.3" cy="6.8" rx="3.9" ry="3.7" fill="#fff"/><circle cx="8.3" cy="6.8" r="1.9" fill="#e8a21a"/></svg></div>
<div class="a" style="left:928.5px;top:466px;line-height:0"><svg width="15" height="15" viewBox="0 0 15 15"><path d="M0.3 14.7V11.4L9.7 2.1L12.9 5.3L3.6 14.7Z" fill="#1a6ffa"/><path d="M10.6 1.2L11.6 0.2Q12.1 -0.2 12.6 0.2L14.8 2.4Q15.2 2.9 14.8 3.4L13.8 4.4Z" fill="#1a6ffa"/></svg></div>
<div class="a" style="left:958px;top:466px;line-height:0"><svg width="16" height="16" viewBox="0 0 16 16"><path d="M4 0h7.2v3.1H4z M5.2 1.2v1.9h4.8V1.2z" fill="#f50a0a" fill-rule="evenodd"/><rect x="0" y="3.1" width="15.2" height="2" fill="#f50a0a"/><path d="M1.4 5.1h12v9.9h-12z M5.2 6.8v4.2h1.4V6.8z M8.4 6.8v4.2h1.4V6.8z" fill="#f50a0a" fill-rule="evenodd"/></svg></div>
<div class="a" style="left:274px;top:505px;width:757px;height:61px;border-bottom:1px solid #e0e0e0;border-left:1px solid #ececec;border-right:1px solid #ececec"></div>
<div class="a nw rt" style="left:290px;top:527.0px">2</div>
<div class="a nw rt" style="left:386.5px;top:527.0px">Koruti sistem</div>
<div class="a nw rt" style="left:644px;top:527.0px">driver</div>
<div class="a bdg on" style="left:744px;top:521px">Active</div>
<div class="a" style="left:897px;top:527.5px;line-height:0"><svg width="17" height="14" viewBox="0 0 17 14"><ellipse cx="8.3" cy="6.8" rx="8.1" ry="6.6" fill="#e8a21a"/><ellipse cx="8.3" cy="6.8" rx="3.9" ry="3.7" fill="#fff"/><circle cx="8.3" cy="6.8" r="1.9" fill="#e8a21a"/></svg></div>
<div class="a" style="left:928.5px;top:527px;line-height:0"><svg width="15" height="15" viewBox="0 0 15 15"><path d="M0.3 14.7V11.4L9.7 2.1L12.9 5.3L3.6 14.7Z" fill="#1a6ffa"/><path d="M10.6 1.2L11.6 0.2Q12.1 -0.2 12.6 0.2L14.8 2.4Q15.2 2.9 14.8 3.4L13.8 4.4Z" fill="#1a6ffa"/></svg></div>
<div class="a" style="left:958px;top:527px;line-height:0"><svg width="16" height="16" viewBox="0 0 16 16"><path d="M4 0h7.2v3.1H4z M5.2 1.2v1.9h4.8V1.2z" fill="#f50a0a" fill-rule="evenodd"/><rect x="0" y="3.1" width="15.2" height="2" fill="#f50a0a"/><path d="M1.4 5.1h12v9.9h-12z M5.2 6.8v4.2h1.4V6.8z M8.4 6.8v4.2h1.4V6.8z" fill="#f50a0a" fill-rule="evenodd"/></svg></div>
<div class="a" style="left:274px;top:566px;width:757px;height:61px;border-bottom:1px solid #e0e0e0;border-left:1px solid #ececec;border-right:1px solid #ececec"></div>
<div class="a nw rt" style="left:290px;top:588.0px">3</div>
<div class="a nw rt" style="left:386.5px;top:588.0px">Test Patel</div>
<div class="a nw rt" style="left:644px;top:588.0px">-</div>
<div class="a bdg on" style="left:744px;top:582px">Active</div>
<div class="a" style="left:897px;top:588.5px;line-height:0"><svg width="17" height="14" viewBox="0 0 17 14"><ellipse cx="8.3" cy="6.8" rx="8.1" ry="6.6" fill="#e8a21a"/><ellipse cx="8.3" cy="6.8" rx="3.9" ry="3.7" fill="#fff"/><circle cx="8.3" cy="6.8" r="1.9" fill="#e8a21a"/></svg></div>
<div class="a" style="left:928.5px;top:588px;line-height:0"><svg width="15" height="15" viewBox="0 0 15 15"><path d="M0.3 14.7V11.4L9.7 2.1L12.9 5.3L3.6 14.7Z" fill="#1a6ffa"/><path d="M10.6 1.2L11.6 0.2Q12.1 -0.2 12.6 0.2L14.8 2.4Q15.2 2.9 14.8 3.4L13.8 4.4Z" fill="#1a6ffa"/></svg></div>
<div class="a" style="left:958px;top:588px;line-height:0"><svg width="16" height="16" viewBox="0 0 16 16"><path d="M4 0h7.2v3.1H4z M5.2 1.2v1.9h4.8V1.2z" fill="#f50a0a" fill-rule="evenodd"/><rect x="0" y="3.1" width="15.2" height="2" fill="#f50a0a"/><path d="M1.4 5.1h12v9.9h-12z M5.2 6.8v4.2h1.4V6.8z M8.4 6.8v4.2h1.4V6.8z" fill="#f50a0a" fill-rule="evenodd"/></svg></div>
<div class="a" style="left:274px;top:627px;width:757px;height:61px;border-bottom:1px solid #e0e0e0;border-left:1px solid #ececec;border-right:1px solid #ececec"></div>
<div class="a nw rt" style="left:290px;top:649.0px">4</div>
<div class="a nw rt" style="left:386.5px;top:649.0px">Yash Vyas</div>
<div class="a nw rt" style="left:644px;top:649.0px">-</div>
<div class="a bdg off" style="left:744px;top:643px">Inactive</div>
<div class="a" style="left:897px;top:649.5px;line-height:0"><svg width="17" height="14" viewBox="0 0 17 14"><ellipse cx="8.3" cy="6.8" rx="8.1" ry="6.6" fill="#e8a21a"/><ellipse cx="8.3" cy="6.8" rx="3.9" ry="3.7" fill="#fff"/><circle cx="8.3" cy="6.8" r="1.9" fill="#e8a21a"/></svg></div>
<div class="a" style="left:928.5px;top:649px;line-height:0"><svg width="15" height="15" viewBox="0 0 15 15"><path d="M0.3 14.7V11.4L9.7 2.1L12.9 5.3L3.6 14.7Z" fill="#1a6ffa"/><path d="M10.6 1.2L11.6 0.2Q12.1 -0.2 12.6 0.2L14.8 2.4Q15.2 2.9 14.8 3.4L13.8 4.4Z" fill="#1a6ffa"/></svg></div>
<div class="a" style="left:958px;top:649px;line-height:0"><svg width="16" height="16" viewBox="0 0 16 16"><path d="M4 0h7.2v3.1H4z M5.2 1.2v1.9h4.8V1.2z" fill="#f50a0a" fill-rule="evenodd"/><rect x="0" y="3.1" width="15.2" height="2" fill="#f50a0a"/><path d="M1.4 5.1h12v9.9h-12z M5.2 6.8v4.2h1.4V6.8z M8.4 6.8v4.2h1.4V6.8z" fill="#f50a0a" fill-rule="evenodd"/></svg></div>
<div class="a" style="left:274px;top:688px;width:757px;height:61px;border-bottom:1px solid #e0e0e0;border-left:1px solid #ececec;border-right:1px solid #ececec"></div>
<div class="a nw rt" style="left:290px;top:710.0px">5</div>
<div class="a nw rt" style="left:386.5px;top:710.0px">Parita Vyas</div>
<div class="a nw rt" style="left:644px;top:710.0px">-</div>
<div class="a bdg on" style="left:744px;top:704px">Active</div>
<div class="a" style="left:897px;top:710.5px;line-height:0"><svg width="17" height="14" viewBox="0 0 17 14"><ellipse cx="8.3" cy="6.8" rx="8.1" ry="6.6" fill="#e8a21a"/><ellipse cx="8.3" cy="6.8" rx="3.9" ry="3.7" fill="#fff"/><circle cx="8.3" cy="6.8" r="1.9" fill="#e8a21a"/></svg></div>
<div class="a" style="left:928.5px;top:710px;line-height:0"><svg width="15" height="15" viewBox="0 0 15 15"><path d="M0.3 14.7V11.4L9.7 2.1L12.9 5.3L3.6 14.7Z" fill="#1a6ffa"/><path d="M10.6 1.2L11.6 0.2Q12.1 -0.2 12.6 0.2L14.8 2.4Q15.2 2.9 14.8 3.4L13.8 4.4Z" fill="#1a6ffa"/></svg></div>
<div class="a" style="left:958px;top:710px;line-height:0"><svg width="16" height="16" viewBox="0 0 16 16"><path d="M4 0h7.2v3.1H4z M5.2 1.2v1.9h4.8V1.2z" fill="#f50a0a" fill-rule="evenodd"/><rect x="0" y="3.1" width="15.2" height="2" fill="#f50a0a"/><path d="M1.4 5.1h12v9.9h-12z M5.2 6.8v4.2h1.4V6.8z M8.4 6.8v4.2h1.4V6.8z" fill="#f50a0a" fill-rule="evenodd"/></svg></div>
<div class="a" style="left:274px;top:749px;width:757px;height:61px;border-bottom:1px solid #e0e0e0;border-left:1px solid #ececec;border-right:1px solid #ececec"></div>
<div class="a nw rt" style="left:290px;top:771.0px">6</div>
<div class="a nw rt" style="left:386.5px;top:771.0px">Himalay Patel</div>
<div class="a nw rt" style="left:644px;top:771.0px">-</div>
<div class="a bdg on" style="left:744px;top:765px">Active</div>
<div class="a" style="left:897px;top:771.5px;line-height:0"><svg width="17" height="14" viewBox="0 0 17 14"><ellipse cx="8.3" cy="6.8" rx="8.1" ry="6.6" fill="#e8a21a"/><ellipse cx="8.3" cy="6.8" rx="3.9" ry="3.7" fill="#fff"/><circle cx="8.3" cy="6.8" r="1.9" fill="#e8a21a"/></svg></div>
<div class="a" style="left:928.5px;top:771px;line-height:0"><svg width="15" height="15" viewBox="0 0 15 15"><path d="M0.3 14.7V11.4L9.7 2.1L12.9 5.3L3.6 14.7Z" fill="#1a6ffa"/><path d="M10.6 1.2L11.6 0.2Q12.1 -0.2 12.6 0.2L14.8 2.4Q15.2 2.9 14.8 3.4L13.8 4.4Z" fill="#1a6ffa"/></svg></div>
<div class="a" style="left:958px;top:771px;line-height:0"><svg width="16" height="16" viewBox="0 0 16 16"><path d="M4 0h7.2v3.1H4z M5.2 1.2v1.9h4.8V1.2z" fill="#f50a0a" fill-rule="evenodd"/><rect x="0" y="3.1" width="15.2" height="2" fill="#f50a0a"/><path d="M1.4 5.1h12v9.9h-12z M5.2 6.8v4.2h1.4V6.8z M8.4 6.8v4.2h1.4V6.8z" fill="#f50a0a" fill-rule="evenodd"/></svg></div>
<div class="a" style="left:274px;top:810px;width:757px;height:61px;border-bottom:1px solid #e0e0e0;border-left:1px solid #ececec;border-right:1px solid #ececec"></div>
<div class="a nw rt" style="left:290px;top:832.0px">7</div>
<div class="a nw rt" style="left:386.5px;top:832.0px">Koruti sistem</div>
<div class="a nw rt" style="left:644px;top:832.0px">-</div>
<div class="a bdg off" style="left:744px;top:826px">Inactive</div>
<div class="a" style="left:897px;top:832.5px;line-height:0"><svg width="17" height="14" viewBox="0 0 17 14"><ellipse cx="8.3" cy="6.8" rx="8.1" ry="6.6" fill="#e8a21a"/><ellipse cx="8.3" cy="6.8" rx="3.9" ry="3.7" fill="#fff"/><circle cx="8.3" cy="6.8" r="1.9" fill="#e8a21a"/></svg></div>
<div class="a" style="left:928.5px;top:832px;line-height:0"><svg width="15" height="15" viewBox="0 0 15 15"><path d="M0.3 14.7V11.4L9.7 2.1L12.9 5.3L3.6 14.7Z" fill="#1a6ffa"/><path d="M10.6 1.2L11.6 0.2Q12.1 -0.2 12.6 0.2L14.8 2.4Q15.2 2.9 14.8 3.4L13.8 4.4Z" fill="#1a6ffa"/></svg></div>
<div class="a" style="left:958px;top:832px;line-height:0"><svg width="16" height="16" viewBox="0 0 16 16"><path d="M4 0h7.2v3.1H4z M5.2 1.2v1.9h4.8V1.2z" fill="#f50a0a" fill-rule="evenodd"/><rect x="0" y="3.1" width="15.2" height="2" fill="#f50a0a"/><path d="M1.4 5.1h12v9.9h-12z M5.2 6.8v4.2h1.4V6.8z M8.4 6.8v4.2h1.4V6.8z" fill="#f50a0a" fill-rule="evenodd"/></svg></div>
<div class="a" style="left:274px;top:871px;width:757px;height:61px;border-bottom:1px solid #e0e0e0;border-left:1px solid #ececec;border-right:1px solid #ececec"></div>
<div class="a nw rt" style="left:290px;top:893.0px">8</div>
<div class="a nw rt" style="left:386.5px;top:893.0px">Karol Stecel</div>
<div class="a nw rt" style="left:644px;top:893.0px">-</div>
<div class="a bdg off" style="left:744px;top:887px">Inactive</div>
<div class="a" style="left:897px;top:893.5px;line-height:0"><svg width="17" height="14" viewBox="0 0 17 14"><ellipse cx="8.3" cy="6.8" rx="8.1" ry="6.6" fill="#e8a21a"/><ellipse cx="8.3" cy="6.8" rx="3.9" ry="3.7" fill="#fff"/><circle cx="8.3" cy="6.8" r="1.9" fill="#e8a21a"/></svg></div>
<div class="a" style="left:928.5px;top:893px;line-height:0"><svg width="15" height="15" viewBox="0 0 15 15"><path d="M0.3 14.7V11.4L9.7 2.1L12.9 5.3L3.6 14.7Z" fill="#1a6ffa"/><path d="M10.6 1.2L11.6 0.2Q12.1 -0.2 12.6 0.2L14.8 2.4Q15.2 2.9 14.8 3.4L13.8 4.4Z" fill="#1a6ffa"/></svg></div>
<div class="a" style="left:958px;top:893px;line-height:0"><svg width="16" height="16" viewBox="0 0 16 16"><path d="M4 0h7.2v3.1H4z M5.2 1.2v1.9h4.8V1.2z" fill="#f50a0a" fill-rule="evenodd"/><rect x="0" y="3.1" width="15.2" height="2" fill="#f50a0a"/><path d="M1.4 5.1h12v9.9h-12z M5.2 6.8v4.2h1.4V6.8z M8.4 6.8v4.2h1.4V6.8z" fill="#f50a0a" fill-rule="evenodd"/></svg></div>
<div class="a" style="left:274px;top:932px;width:757px;height:61px;border-bottom:1px solid #e0e0e0;border-left:1px solid #ececec;border-right:1px solid #ececec"></div>
<div class="a nw rt" style="left:290px;top:954.0px">9</div>
<div class="a nw rt" style="left:386.5px;top:954.0px">kushal Dulani</div>
<div class="a nw rt" style="left:644px;top:954.0px">-</div>
<div class="a bdg off" style="left:744px;top:948px">Inactive</div>
<div class="a" style="left:897px;top:954.5px;line-height:0"><svg width="17" height="14" viewBox="0 0 17 14"><ellipse cx="8.3" cy="6.8" rx="8.1" ry="6.6" fill="#e8a21a"/><ellipse cx="8.3" cy="6.8" rx="3.9" ry="3.7" fill="#fff"/><circle cx="8.3" cy="6.8" r="1.9" fill="#e8a21a"/></svg></div>
<div class="a" style="left:928.5px;top:954px;line-height:0"><svg width="15" height="15" viewBox="0 0 15 15"><path d="M0.3 14.7V11.4L9.7 2.1L12.9 5.3L3.6 14.7Z" fill="#1a6ffa"/><path d="M10.6 1.2L11.6 0.2Q12.1 -0.2 12.6 0.2L14.8 2.4Q15.2 2.9 14.8 3.4L13.8 4.4Z" fill="#1a6ffa"/></svg></div>
<div class="a" style="left:958px;top:954px;line-height:0"><svg width="16" height="16" viewBox="0 0 16 16"><path d="M4 0h7.2v3.1H4z M5.2 1.2v1.9h4.8V1.2z" fill="#f50a0a" fill-rule="evenodd"/><rect x="0" y="3.1" width="15.2" height="2" fill="#f50a0a"/><path d="M1.4 5.1h12v9.9h-12z M5.2 6.8v4.2h1.4V6.8z M8.4 6.8v4.2h1.4V6.8z" fill="#f50a0a" fill-rule="evenodd"/></svg></div>
<svg class="a" style="left:1055px;top:385px" width="757" height="373" viewBox="1125 499 757 373">
<line x1="1170.3" x2="1861" y1="748.8" y2="748.8" stroke="#e3e3e3" stroke-width="1"/>
<line x1="1170.3" x2="1861" y1="679.1" y2="679.1" stroke="#e3e3e3" stroke-width="1"/>
<line x1="1170.3" x2="1861" y1="609.5" y2="609.5" stroke="#e3e3e3" stroke-width="1"/>
<line x1="1170.3" x2="1861" y1="818.4" y2="818.4" stroke="#d6d6d6" stroke-width="1"/>
<line x1="1170.3" x2="1170.3" y1="818.4" y2="824.4" stroke="#d6d6d6" stroke-width="1"/>
<line x1="1227.9" x2="1227.9" y1="818.4" y2="824.4" stroke="#d6d6d6" stroke-width="1"/>
<line x1="1285.4" x2="1285.4" y1="818.4" y2="824.4" stroke="#d6d6d6" stroke-width="1"/>
<line x1="1343.0" x2="1343.0" y1="818.4" y2="824.4" stroke="#d6d6d6" stroke-width="1"/>
<line x1="1400.5" x2="1400.5" y1="818.4" y2="824.4" stroke="#d6d6d6" stroke-width="1"/>
<line x1="1458.1" x2="1458.1" y1="818.4" y2="824.4" stroke="#d6d6d6" stroke-width="1"/>
<line x1="1515.7" x2="1515.7" y1="818.4" y2="824.4" stroke="#d6d6d6" stroke-width="1"/>
<line x1="1573.2" x2="1573.2" y1="818.4" y2="824.4" stroke="#d6d6d6" stroke-width="1"/>
<line x1="1630.8" x2="1630.8" y1="818.4" y2="824.4" stroke="#d6d6d6" stroke-width="1"/>
<line x1="1688.3" x2="1688.3" y1="818.4" y2="824.4" stroke="#d6d6d6" stroke-width="1"/>
<line x1="1745.9" x2="1745.9" y1="818.4" y2="824.4" stroke="#d6d6d6" stroke-width="1"/>
<line x1="1803.4" x2="1803.4" y1="818.4" y2="824.4" stroke="#d6d6d6" stroke-width="1"/>
<line x1="1861.0" x2="1861.0" y1="818.4" y2="824.4" stroke="#d6d6d6" stroke-width="1"/>
<rect x="1184.1" y="720.9" width="30" height="97.5" fill="#4fb1a3"/>
<rect x="1184.1" y="679.1" width="30" height="41.8" fill="#e35c5c"/>
<rect x="1241.6" y="727.9" width="30" height="90.5" fill="#4fb1a3"/>
<rect x="1241.6" y="679.1" width="30" height="48.7" fill="#e35c5c"/>
<rect x="1299.2" y="693.1" width="30" height="125.3" fill="#4fb1a3"/>
<rect x="1299.2" y="637.4" width="30" height="55.7" fill="#e35c5c"/>
<rect x="1356.8" y="748.8" width="30" height="69.6" fill="#4fb1a3"/>
<rect x="1356.8" y="734.8" width="30" height="13.9" fill="#e35c5c"/>
<rect x="1414.3" y="734.8" width="30" height="83.6" fill="#4fb1a3"/>
<rect x="1414.3" y="714.0" width="30" height="20.9" fill="#e35c5c"/>
<rect x="1471.9" y="707.0" width="30" height="111.4" fill="#4fb1a3"/>
<rect x="1471.9" y="644.3" width="30" height="62.7" fill="#e35c5c"/>
<text x="1199.1" y="841.5" text-anchor="middle" font-size="12" fill="#444" font-family="Liberation Sans">Jan</text>
<text x="1256.6" y="841.5" text-anchor="middle" font-size="12" fill="#444" font-family="Liberation Sans">Feb</text>
<text x="1314.2" y="841.5" text-anchor="middle" font-size="12" fill="#444" font-family="Liberation Sans">Mar</text>
<text x="1371.8" y="841.5" text-anchor="middle" font-size="12" fill="#444" font-family="Liberation Sans">Apr</text>
<text x="1429.3" y="841.5" text-anchor="middle" font-size="12" fill="#444" font-family="Liberation Sans">May</text>
<text x="1486.9" y="841.5" text-anchor="middle" font-size="12" fill="#444" font-family="Liberation Sans">Jun</text>
<text x="1544.4" y="841.5" text-anchor="middle" font-size="12" fill="#444" font-family="Liberation Sans">Jul</text>
<text x="1602.0" y="841.5" text-anchor="middle" font-size="12" fill="#444" font-family="Liberation Sans">Aug</text>
<text x="1659.5" y="841.5" text-anchor="middle" font-size="12" fill="#444" font-family="Liberation Sans">Sep</text>
<text x="1717.1" y="841.5" text-anchor="middle" font-size="12" fill="#444" font-family="Liberation Sans">Oct</text>
<text x="1774.7" y="841.5" text-anchor="middle" font-size="12" fill="#444" font-family="Liberation Sans">Nov</text>
<text x="1832.2" y="841.5" text-anchor="middle" font-size="12" fill="#444" font-family="Liberation Sans">Dec</text>
<text x="1160" y="822.6" text-anchor="end" font-size="11.5" fill="#444" font-family="Liberation Sans">0</text>
<text x="1160" y="753.0" text-anchor="end" font-size="11.5" fill="#444" font-family="Liberation Sans">50</text>
<text x="1160" y="683.3" text-anchor="end" font-size="11.5" fill="#444" font-family="Liberation Sans">100</text>
<text x="1160" y="613.7" text-anchor="end" font-size="11.5" fill="#444" font-family="Liberation Sans">150</text>
<rect x="1433" y="566" width="12" height="12" fill="#35a593"/>
<text x="1448" y="576" font-size="12" fill="#333" font-family="Liberation Sans">Revenue</text>
<rect x="1508" y="566" width="12" height="12" fill="#e34747"/>
<text x="1523" y="576" font-size="12" fill="#333" font-family="Liberation Sans">Expenses</text>
</svg>
<div class="a" style="left:1418px;top:16px;width:158px;height:108px;background:#fff;border-radius:5px;box-shadow:0 2px 7px rgba(0,0,0,0.18),0 0 1px rgba(0,0,0,0.1)"></div>
<div class="a" style="left:1418px;top:24px;width:158px;height:46px;background:#e5f0fd"></div>
<svg class="a" style="left:1434px;top:38px" width="24" height="18" viewBox="0 0 24 18">
  <defs><clipPath id="ukc"><path d="M0 1.5q6-2 12 0t12 0V16.5q-6 2-12 0t-12 0z"/></clipPath></defs>
  <g clip-path="url(#ukc)">
    <rect width="24" height="18" fill="#1f3f8f"/>
    <path d="M0 0L24 18M24 0L0 18" stroke="#fff" stroke-width="4"/>
    <path d="M0 0L24 18M24 0L0 18" stroke="#d52b3a" stroke-width="1.4"/>
    <path d="M12 0V18M0 9H24" stroke="#fff" stroke-width="5.5"/>
    <path d="M12 0V18M0 9H24" stroke="#d52b3a" stroke-width="3"/>
  </g>
</svg>
<div class="a nw" style="left:1467px;top:38.5px;font-size:15px;line-height:1;font-weight:700;color:#1f6fd8;letter-spacing:-0.9px">English</div>
<svg class="a" style="left:1542px;top:40px" width="16" height="12" viewBox="0 0 16 12"><path d="M2 6.2l3.8 3.8L14 1.8" fill="none" stroke="#3b5998" stroke-width="1.7"/></svg>
<svg class="a" style="left:1434px;top:84px" width="24" height="18" viewBox="0 0 24 18">
  <defs><clipPath id="itc"><path d="M0 1.5q6-2 12 0t12 0V16.5q-6 2-12 0t-12 0z"/></clipPath></defs>
  <g clip-path="url(#itc)">
    <rect width="8" height="18" fill="#1e9a48"/>
    <rect x="8" width="8" height="18" fill="#f4f4f4"/>
    <rect x="16" width="8" height="18" fill="#d8262f"/>
  </g>
</svg>
<div class="a nw" style="left:1467px;top:84.5px;font-size:15px;line-height:1;color:#161616;letter-spacing:-0.1px">Italiano</div>

</div>

<!-- Scrollbar -->
<div id="sbar" class="a">
  <div class="a" style="left:3px;top:4px;width:0;height:0;border-left:4.5px solid transparent;border-right:4.5px solid transparent;border-bottom:5px solid #8a8a8a"></div>
  <div class="a" style="left:3px;top:18px;width:9px;height:789px;border-radius:5px;background:#8a8a8a"></div>
  <div class="a" style="left:3px;top:954px;width:0;height:0;border-left:4.5px solid transparent;border-right:4.5px solid transparent;border-top:5px solid #8a8a8a"></div>
</div>

</body></html>
